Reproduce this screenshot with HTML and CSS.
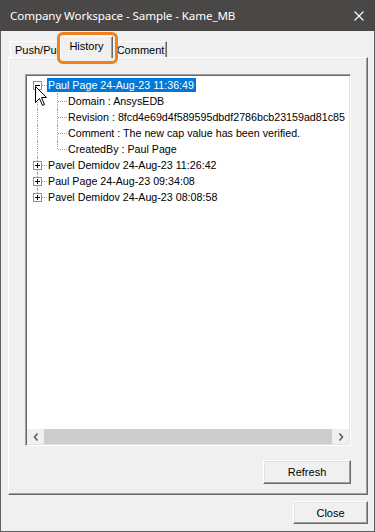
FILE: index.html
```html
<!DOCTYPE html>
<html>
<head>
<meta charset="utf-8">
<link rel="stylesheet" href="styles.css">
</head>
<body>
<div class="window">
  <div class="titlebar">
    <span class="title">Company Workspace - Sample - Kame_MB</span>
    <svg class="close-x" width="10" height="10" viewBox="0 0 10 10"><path d="M0.5 0.5 L9.5 9.5 M9.5 0.5 L0.5 9.5" stroke="#fff" stroke-width="1.1" fill="none"/></svg>
  </div>
  <div class="content">
    <div class="tabs">
      <div class="tab tab-push">Push/Pull</div>
      <div class="tab tab-history active">History<span class="ring"></span></div>
      <div class="tab tab-comment">Comment</div>
    </div>
    <div class="panel">
      <div class="tree">
        <div class="rows">
          <div class="row">
            <span class="cell vb h"><span class="exp minus"></span></span>
            <span class="label selected">Paul Page 24-Aug-23 11:36:49</span>
          </div>
          <div class="row">
            <span class="cell v"></span><span class="cell v h"></span>
            <span class="label">Domain : AnsysEDB</span>
          </div>
          <div class="row">
            <span class="cell v"></span><span class="cell v h"></span>
            <span class="label">Revision : 8fcd4e69d4f589595dbdf2786bcb23159ad81c85</span>
          </div>
          <div class="row">
            <span class="cell v"></span><span class="cell v h"></span>
            <span class="label">Comment : The new cap value has been verified.</span>
          </div>
          <div class="row">
            <span class="cell v"></span><span class="cell vt h"></span>
            <span class="label">CreatedBy : Paul Page</span>
          </div>
          <div class="row">
            <span class="cell v h"><span class="exp plus"></span></span>
            <span class="label">Pavel Demidov 24-Aug-23 11:26:42</span>
          </div>
          <div class="row">
            <span class="cell v h"><span class="exp plus"></span></span>
            <span class="label">Paul Page 24-Aug-23 09:34:08</span>
          </div>
          <div class="row">
            <span class="cell vt h"><span class="exp plus"></span></span>
            <span class="label">Pavel Demidov 24-Aug-23 08:08:58</span>
          </div>
        </div>
        <div class="hscroll">
          <span class="sb-btn"><svg width="6" height="8" viewBox="0 0 6 8"><path d="M4.5 0.5 L1.5 4 L4.5 7.5" stroke="#606060" stroke-width="1.6" fill="none"/></svg></span>
          <span class="sb-track"><span class="sb-thumb"></span></span>
          <span class="sb-btn"><svg width="6" height="8" viewBox="0 0 6 8"><path d="M1.5 0.5 L4.5 4 L1.5 7.5" stroke="#606060" stroke-width="1.6" fill="none"/></svg></span>
        </div>
      </div>
      <div class="panel-actions">
        <button class="btn btn-refresh">Refresh</button>
      </div>
    </div>
    <div class="dialog-actions">
      <button class="btn btn-close">Close</button>
    </div>
  </div>
  <svg class="cursor" width="13" height="21" viewBox="0 0 13 21"><path d="M0.5 0.5 L0.5 16.5 L4.5 12.5 L7.5 19.5 L9.5 18.5 L6.5 11.5 L11.5 11.5 Z" fill="#fff" stroke="#000" stroke-width="1" stroke-linejoin="miter"/></svg>
</div>
</body>
</html>
```
FILE: styles.css
```css
* { box-sizing: border-box; }
html, body { margin: 0; padding: 0; background: #f0f0f0; }
body { font-family: "Liberation Sans", Arial, sans-serif; font-size: 11px; color: #000; }

.window {
  position: relative;
  width: 375px;
  height: 532px;
  background: #f0f0f0;
  border: 1px solid #5f5f5f;
  border-top: none;
  display: flex;
  flex-direction: column;
}

.titlebar {
  height: 31px;
  flex: none;
  margin: 0 -1px;
  background: #4a4846;
  display: flex;
  align-items: center;
  justify-content: space-between;
  padding: 0 11px 0 10px;
}
.title {
  color: #fff;
  font-family: "Noto Sans", "Open Sans", sans-serif;
  font-size: 11.6px;
  letter-spacing: -0.1px;
}
.close-x { display: block; }

.content {
  padding: 0 6px 0 7px;
  display: flex;
  flex-direction: column;
}

.tabs {
  height: 26px;
  padding: 5px 0 0 2px;
  display: flex;
  align-items: flex-end;
}
.tab {
  height: 16px;
  border: 1px solid #fff;
  border-bottom: none;
  border-right-color: #696969;
  box-shadow: inset -1px 0 0 #a0a0a0;
  display: flex;
  align-items: center;
  justify-content: center;
  background: #f0f0f0;
  padding-top: 1px;
}
.tab-push { width: 52px; justify-content: flex-start; padding-left: 4px; overflow: hidden; white-space: nowrap; }
.tab-history {
  width: 53px;
  height: 22px;
  margin: 0 -2px -1px -2px;
  position: relative;
  z-index: 2;
  padding-top: 0;
  padding-bottom: 3px;
}
.tab-comment { width: 56px; padding-left: 3px; }
.ring {
  position: absolute;
  left: -4px;
  top: -5px;
  width: 61px;
  height: 32px;
  border: 3px solid #f07f1d;
  border-radius: 6px;
}

.panel {
  height: 438px;
  border: 1px solid;
  border-color: #fff #696969 #696969 #fff;
  box-shadow: inset -1px -1px 0 #a0a0a0;
  padding: 16px 16px 10px 16px;
  display: flex;
  flex-direction: column;
}

.tree {
  height: 372px;
  background: #fff;
  border: 1px solid;
  border-color: #a0a0a0 #fff #fff #a0a0a0;
  box-shadow: inset 1px 1px 0 #696969, inset -1px -1px 0 #e3e3e3;
  display: flex;
  flex-direction: column;
  overflow: hidden;
  font-size: 10.7px;
}
.rows {
  flex: 1;
  padding: 2px 0 0 1px;
  overflow: hidden;
}
.row {
  height: 16px;
  display: flex;
  align-items: center;
  white-space: nowrap;
}
.cell {
  position: relative;
  flex: none;
  width: 20px;
  height: 16px;
}
.cell.v::before, .cell.vt::before, .cell.vb::before {
  content: "";
  position: absolute;
  left: 10px;
  top: 0;
  bottom: 0;
  border-left: 1px dotted #a0a0a0;
}
.cell.vt::before { bottom: 8px; }
.cell.vb::before { top: 8px; }
.cell.h::after {
  content: "";
  position: absolute;
  left: 11px;
  right: 0;
  top: 8px;
  border-top: 1px dotted #a0a0a0;
}
.exp {
  position: absolute;
  left: 6px;
  top: 4px;
  width: 9px;
  height: 9px;
  border: 1px solid #919191;
  background: #fff;
  z-index: 1;
}
.exp::before {
  content: "";
  position: absolute;
  left: 1px;
  top: 3px;
  width: 5px;
  height: 1px;
  background: #000;
}
.exp.plus::after {
  content: "";
  position: absolute;
  left: 3px;
  top: 1px;
  width: 1px;
  height: 5px;
  background: #000;
}
.label {
  padding: 0 1px;
  height: 14px;
  line-height: 14px;
}
.label.selected { background: #0078d7; color: #fff; padding-right: 2px; }

.hscroll {
  flex: none;
  height: 15px;
  margin: 0 1px 1px 1px;
  display: flex;
  background: #f0f0f0;
}
.sb-btn {
  width: 17px;
  flex: none;
  display: flex;
  align-items: center;
  justify-content: center;
}
.sb-track { flex: 1; display: flex; }
.sb-thumb { flex: 1; background: #cdcdcd; }

.panel-actions {
  margin-top: 14px;
  display: flex;
  justify-content: flex-end;
}
.btn {
  font-family: "Liberation Sans", Arial, sans-serif;
  font-size: 11px;
  color: #000;
  background: #f0f0f0;
  border: 1px solid;
  border-color: #fff #696969 #696969 #fff;
  box-shadow: inset -1px -1px 0 #a0a0a0, inset 1px 1px 0 #e3e3e3;
  padding: 0;
  margin: 0;
}
.btn-refresh { width: 88px; height: 24px; }
.dialog-actions {
  margin-top: 6px;
  display: flex;
  justify-content: flex-end;
}
.btn-close { width: 75px; height: 23px; }

.cursor {
  position: absolute;
  left: 34px;
  top: 86px;
  z-index: 5;
}
```
